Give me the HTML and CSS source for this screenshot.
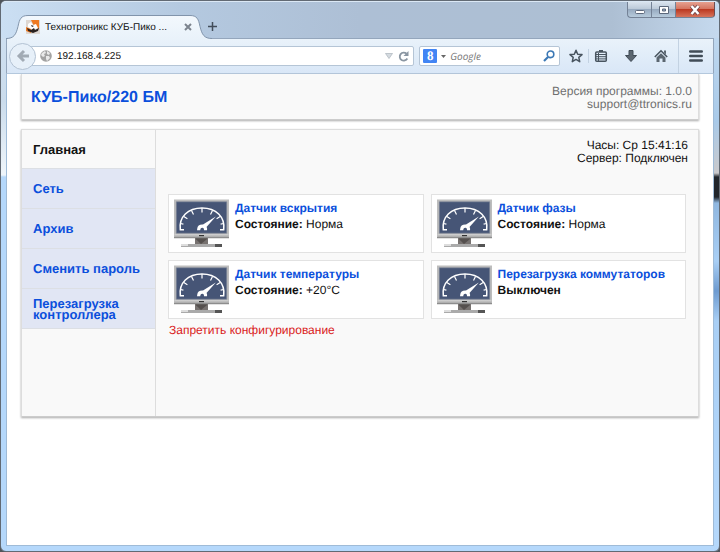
FILE: index.html
```html
<!DOCTYPE html>
<html lang="ru">
<head>
<meta charset="utf-8">
<title>Технотроникс КУБ-Пико</title>
<link rel="stylesheet" href="styles.css">
</head>
<body>
<svg class="defs" aria-hidden="true">
  <defs>
    <linearGradient id="tabfill" x1="0" y1="0" x2="0" y2="1"><stop offset="0" stop-color="#f3f8fd"/><stop offset="1" stop-color="#e9f2fa"/></linearGradient>
    <linearGradient id="chin" x1="0" y1="0" x2="0" y2="1"><stop offset="0" stop-color="#d4d4d4"/><stop offset="1" stop-color="#a9a9a9"/></linearGradient>
    <symbol id="gauge" viewBox="0 0 55 49">
      <path fill="#bdbdbd" d="M0 0.5h55v38.5H0z"/>
      <path fill="#465576" stroke="#7f8799" stroke-width=".6" d="M2.3 2.8h50.4v31.4H2.3z"/>
      <path fill="url(#chin)" d="M0.5 35h54v3h-54z"/>
      <path fill="#8d8d8d" d="M0 38h55v1.2H0z"/>
      <path fill="#333" d="M25 36h5v1.2h-5z"/>
      <path fill="#777270" d="M21 39.2h13V45H21z"/>
      <path fill="#55504e" d="M21 39.2h13L27 45z"/>
      <path fill="#aaa" d="M7 45h41v3H7z"/>
      <path fill="#ddd" d="M7 45h7v2H7z"/>
      <path fill="#555" d="M41 45h7v3h-7z"/>
      <g fill="none" stroke="#fff">
        <path stroke-width="1.5" d="M10 30.7H6.3C4.7 18 14 9 28 9s23.300 9 21.700 21.700H46"/>
        <path stroke-width="1.200" d="M28 9v4.500M17.500 11.500l2 4M38.500 11.500l-2 4M9.800 17.500l3.600 2.200M46.200 17.500l-3.600 2.200M6.200 24.500l3.200.6M49.800 24.500l-3.200.6"/>
      </g>
      <path fill="#fff" d="M41.800 17.500L29 25.500c-3.500-.3-5.500 1.500-5.700 3.700l-.3 2h3.200c.2-1.800 1-2.600 2.300-2.500 1.200.2 1.500 1.200 1.500 2.500h3c.3-1.500 0-2.500-.5-3.200z"/>
    </symbol>
  </defs>
</svg>
<div class="window">
  <header class="titlebar">
    <div class="tab">
      <svg class="tab-shape" viewBox="0 0 208 24" aria-hidden="true"><path fill="url(#tabfill)" d="M0 24v-.5c8 0 10-4 12-12C13.500 4 15 .5 22 .5h162c7 0 8.500 3.500 10 11 2 8 4 12 12 12v.5z"/><path fill="none" stroke="#8194ab" d="M0 23.500c8 0 10-4 12-12C13.500 4 15 .5 22 .5h162c7 0 8.500 3.500 10 11 2 8 4 12 12 12"/></svg>
      <svg class="favicon" viewBox="0 0 14 14" aria-hidden="true"><path fill="#ddd7d2" d="M0 0h14v14H0z"/><path fill="#ef7a22" d="M5 0h8v9L8 6zM0 7l5 2v4l-5-2z"/><path fill="#fff" d="M2 4l3-2 2 3 3-1 2 4-5 2-5-3z"/><path fill="#29211e" d="M1 8l4 2 3-2 1 2 4-2-1 3-5 2-5-2zM5 5l3 1-2 1z"/></svg>
      <span class="tab-title">Технотроникс КУБ-Пико ...</span>
      <button class="plain" aria-label="Закрыть вкладку"><svg width="8" height="8" viewBox="0 0 8 8"><path stroke="#7c848e" stroke-width="2" d="M1 1l6 6M7 1L1 7"/></svg></button>
    </div>
    <button class="plain new-tab" aria-label="Новая вкладка"><svg width="9" height="9" viewBox="0 0 9 9"><path stroke="#424d5a" stroke-width="1.500" d="M0 4.500h9M4.500 0v9"/></svg></button>
    <div class="controls">
      <button aria-label="Свернуть"><svg width="12" height="12" viewBox="0 0 12 12"><rect x="1.500" y="6.500" width="9" height="3" rx="1" fill="#fff" stroke="#5d697c"/></svg></button>
      <button aria-label="Развернуть"><svg width="12" height="12" viewBox="0 0 12 12"><path fill="#fff" stroke="#5d697c" fill-rule="evenodd" d="M1.500 2.500h9v7h-9zM4.500 5h3v2h-3z"/></svg></button>
      <button class="close" aria-label="Закрыть"><svg width="12" height="12" viewBox="0 0 12 12"><path stroke="#6c4449" stroke-width="4" d="M2.500 2l7 8M9.500 2l-7 8"/><path stroke="#fff" stroke-width="2.500" d="M2.500 2l7 8M9.500 2l-7 8"/></svg></button>
    </div>
  </header>
  <nav class="toolbar" aria-label="Навигация">
    <button class="back" aria-label="Назад"><svg width="14" height="14" viewBox="0 0 14 14"><path fill="none" stroke="#a2abb5" stroke-width="3" d="M8 2L3 7l5 5M3 7h10"/></svg></button>
    <div class="field address">
      <svg width="12" height="12" viewBox="0 0 12 12" aria-hidden="true"><circle cx="6" cy="6" r="5.800" fill="#a3a3a3"/><path fill="#e9e9e9" d="M2 3l3-2 1 2-2 1 1 2-2 1-2-2zM7 1l3 2-1 2-2-1zM6 6l3 0 1 2-3 3-1-2z"/></svg>
      <input class="url" aria-label="Адрес" value="192.168.4.225">
      <svg width="8" height="6" viewBox="0 0 8 6" aria-hidden="true"><path fill="#d5dbe0" stroke="#aab3bb" stroke-width=".7" d="M.5.5h7L4 5.500z"/></svg>
      <button class="plain" aria-label="Обновить"><svg width="11" height="11" viewBox="0 0 11 11"><path fill="none" stroke="#8a96a2" stroke-width="1.800" d="M8.500 2.700A4 4 0 1 0 9.300 7.500"/><path fill="#8a96a2" d="M10.500 0v5h-5z"/></svg></button>
    </div>
    <div class="field search">
      <span class="engine" aria-hidden="true">8</span>
      <svg width="5" height="3" viewBox="0 0 5 3" aria-hidden="true"><path fill="#666" d="M0 0h5L2.500 3z"/></svg>
      <input aria-label="Поиск" placeholder="Google">
      <button class="plain" aria-label="Найти"><svg width="12" height="12" viewBox="0 0 12 12"><circle cx="7.500" cy="4.300" r="3.300" fill="none" stroke="#3b78b5" stroke-width="1.600"/><path stroke="#3b78b5" stroke-width="2.200" d="M5 7L1 11"/></svg></button>
    </div>
    <div class="actions">
      <button class="plain" aria-label="В закладки"><svg width="14" height="14" viewBox="0 0 14 14"><path fill="none" stroke="#48545f" stroke-width="1.500" stroke-linejoin="round" d="M7 1.200l1.700 4 4.300.4-3.200 2.800.9 4.300L7 10.400l-3.700 2.300.9-4.300L1 5.600l4.300-.4z"/></svg></button>
      <button class="plain divided" aria-label="Закладки"><svg width="14" height="14" viewBox="0 0 14 14"><path fill="#48545f" d="M5 1h4v2H5z"/><rect x="1.700" y="3" width="10.600" height="9.300" rx="1" fill="none" stroke="#48545f" stroke-width="1.500"/><path stroke="#48545f" d="M2 5.500h10M2 7.700h10M2 9.900h10M4.500 4v8"/></svg></button>
      <button class="plain" aria-label="Загрузки"><svg width="14" height="14" viewBox="0 0 14 14"><path fill="#5b6670" stroke="#414c57" d="M5 1.500h4v5h3.500L7 12.500 1.500 6.500H5z"/></svg></button>
      <button class="plain" aria-label="Домой"><svg width="14" height="14" viewBox="0 0 14 14"><path fill="none" stroke="#48545f" stroke-width="1.600" d="M.8 8L7 1.800 13.200 8"/><path fill="#5b6670" d="M7 4.200L11.500 8.500V13H8.500V9.500h-3V13h-3V8.500zM10 1.500h2v4l-2-2z"/></svg></button>
    </div>
    <button class="plain menu" aria-label="Меню"><svg width="14" height="12" viewBox="0 0 14 12"><path stroke="#414c57" stroke-width="2.400" stroke-linecap="round" d="M1.200 1.500h11.600M1.200 6h11.600M1.200 10.500h11.600"/></svg></button>
  </nav>
  <div class="page">
    <header class="panel brand">
      <h1>КУБ-Пико/220 БМ</h1>
      <p>Версия программы: 1.0.0<br>support@ttronics.ru</p>
    </header>
    <div class="panel layout">
      <nav class="side" aria-label="Разделы">
        <ul>
          <li class="current"><span>Главная</span></li>
          <li><a href="#">Сеть</a></li>
          <li><a href="#">Архив</a></li>
          <li><a href="#">Сменить пароль</a></li>
          <li><a href="#">Перезагрузка контроллера</a></li>
        </ul>
      </nav>
      <main>
        <p class="status">Часы: Ср 15:41:16<br>Сервер: Подключен</p>
        <div class="sensors">
          <article><svg class="gauge" aria-hidden="true"><use href="#gauge"/></svg><div><h2><a href="#">Датчик вскрытия</a></h2><p><b>Состояние:</b> Норма</p></div></article>
          <article><svg class="gauge" aria-hidden="true"><use href="#gauge"/></svg><div><h2><a href="#">Датчик фазы</a></h2><p><b>Состояние:</b> Норма</p></div></article>
          <article><svg class="gauge" aria-hidden="true"><use href="#gauge"/></svg><div><h2><a href="#">Датчик температуры</a></h2><p><b>Состояние:</b> +20°C</p></div></article>
          <article><svg class="gauge" aria-hidden="true"><use href="#gauge"/></svg><div><h2><a href="#">Перезагрузка коммутаторов</a></h2><p><b>Выключен</b></p></div></article>
        </div>
        <a class="lock" href="#">Запретить конфигурирование</a>
      </main>
    </div>
  </div>
</div>
</body>
</html>
```
FILE: styles.css
```css
* { box-sizing: border-box; }
html { background: #50555b; }
body { margin: 0; font: 12px/13px "Liberation Sans", Arial, sans-serif; color: #111; text-rendering: geometricPrecision; }
h1, h2, p, ul { margin: 0; padding: 0; }
a { color: #0b4fdc; text-decoration: none; }
svg { display: block; flex: none; }
button, input { font: inherit; padding: 0; border: 0; text-rendering: inherit; }
.defs { position: absolute; width: 0; height: 0; }
.plain { background: none; flex: none; }

.window {
  display: flex;
  flex-direction: column;
  min-height: 100vh;
  padding: 0 5px 5px;
  border: 1px solid #626a74;
  border-radius: 6px;
  background:
    linear-gradient(#c8ddf1 0, #a9cae9 120px, #c9c9cc 172px, #20252b 176px, #20252b 196px, #8fb7e0 202px, #a9cff5 260px, #6e9bd0 290px, #a9cff5 320px, #b5d8fb) right / 5px 100% no-repeat,
    linear-gradient(#cfe1f3 0, #cbdcec 100px, #f0f6fb 174px, #b5d8fb 176px, #b5d8fb);
}

.titlebar {
  display: flex;
  height: 37px;
  margin: 0 -5px;
  padding: 13px 6px 0 5px;
  position: relative;
  background: linear-gradient(90deg, #cbdff3, #b4c9e0 25%, #adbfd5 50%, #adbfd3 85%, #c5d9ee);
  border-top: 1px solid #dbe8f5;
  border-radius: 5px 5px 0 0;
}
.tab {
  display: flex;
  align-items: center;
  width: 208px;
  height: 24px;
  padding: 0 22px 0 20px;
  gap: 5px;
  position: relative;
  font-size: 10px;
}
.tab-shape { position: absolute; inset: 0; width: 208px; height: 24px; z-index: 1; }
.tab > :not(.tab-shape) { position: relative; z-index: 2; }
.tab-title { flex: 1; white-space: nowrap; }
.favicon { width: 14px; height: 14px; }
.new-tab { align-self: center; margin-left: -6px; z-index: 2; }
.controls { position: absolute; top: 0; right: 4px; display: flex; }
.controls button {
  display: flex;
  align-items: center;
  justify-content: center;
  width: 24px;
  height: 16px;
  border: 1px solid #748296;
  border-top: 0;
  border-right: 0;
  background: linear-gradient(#d9e3ee, #bccad9 45%, #97aac0 50%, #b7cbdc);
}
.controls button:first-child { border-radius: 0 0 0 4px; }
.controls .close {
  width: 40px;
  border-right: 1px solid #6e4c50;
  border-radius: 0 0 4px 0;
  background: linear-gradient(#e6a190, #d57560 45%, #bc3a22 50%, #d7745c);
}

.toolbar {
  display: flex;
  align-items: center;
  height: 36px;
  border: 1px solid #94a6bc;
  border-bottom-color: #b4c8dd;
  background: linear-gradient(#e9f2fa, #d9e7f7);
}
.back {
  display: grid;
  place-items: center;
  flex: none;
  width: 27px;
  height: 27px;
  margin: 0 -6px 0 2px;
  border: 1px solid #b3c2d3;
  border-radius: 50%;
  background: #e7f0f9;
  position: relative;
  z-index: 1;
}
.field {
  display: flex;
  align-items: center;
  min-width: 0;
  height: 20px;
  border: 1px solid #b5c5d6;
  border-radius: 2px;
  background: #fff;
}
.field input { flex: 1; min-width: 0; background: none; outline: 0; }
.address { flex: 387; gap: 5px; padding: 0 4px 0 9px; }
.url { font-size: 10px; color: #111; }
.search { flex: 138; margin: 0 9px 0 5px; padding: 0 4px 0 3px; gap: 4px; font: italic 10px/14px "Open Sans", sans-serif; }
.search input::placeholder { color: #777; opacity: 1; }
.engine { width: 14px; height: 14px; border-radius: 1px; background: #4285f4; color: #fff; font: bold 13px/14px "Liberation Serif", serif; text-align: center; }
.actions { display: flex; flex: none; gap: 16px; padding-right: 10px; }
.actions .divided { border-left: 1px solid #c3d2e2; padding-left: 5px; margin-left: -11px; }
.menu { align-self: stretch; padding: 0 10px; border-left: 1px solid #c3d2e2; }

.page { flex: 1; padding: 0 14px; border: 1px solid #9fbbd7; border-top: 0; background: #fff; }
.panel { background: #f9f9f9; border: 1px solid #ddd; border-bottom-color: #ccc; box-shadow: 0 1px 2px #aaa; }
.brand { display: flex; align-items: center; justify-content: space-between; height: 46px; padding: 3px 6px 0 9px; border-top: 0; }
.brand h1 { font-size: 16px; line-height: 20px; color: #0b4fdc; }
.brand p { color: #707070; text-align: right; }
.layout { display: flex; margin-top: 9px; min-height: 288px; }
.side { flex: none; width: 134px; border-right: 1px solid #ddd; font-size: 13px; line-height: 11px; font-weight: bold; }
.side ul { list-style: none; }
.side li { display: flex; align-items: center; height: 40px; padding-left: 11px; background: #e1e6f4; border-bottom: 1px solid #dcdfe4; }
.side .current { height: 39px; background: none; }
main { flex: 1; padding: 9px 12px; }
.status { margin-right: -2px; text-align: right; }
.sensors { display: grid; grid-template-columns: 1fr 1fr; gap: 7px; margin-top: 29px; }
.sensors article { display: flex; gap: 6px; height: 59px; padding: 4px 5px; border: 1px solid #e2e2e2; background: #fff; }
.gauge { width: 55px; height: 49px; }
.sensors h2 { padding-top: 1px; font-size: 12px; line-height: 16px; }
.sensors p { line-height: 16px; }
.lock { display: inline-block; margin-top: 5px; padding-left: 1px; color: #d9211c; }
```
